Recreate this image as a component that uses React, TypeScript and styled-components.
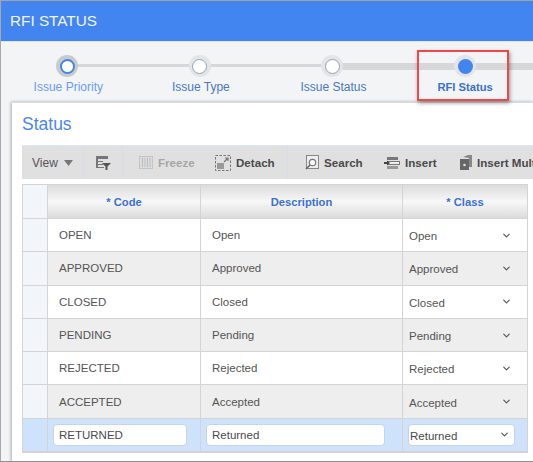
import styled, { createGlobalStyle } from "styled-components";
import { ChevronDown } from "lucide-react";

const GlobalStyle = createGlobalStyle`
  html, body {
    margin: 0;
    padding: 0;
    background: #f3f4f6;
  }
  * {
    box-sizing: border-box;
  }
`;

const Page = styled.div`
  position: relative;
  width: 533px;
  height: 462px;
  overflow: hidden;
  border-top: 1px solid #a3a3a3;
  border-left: 1px solid #a8a8a8;
  border-bottom: 1px solid #8f8f8f;
  background: #f3f4f6;
  font-family: "Liberation Sans", Arial, sans-serif;
`;

const Header = styled.div`
  display: flex;
  align-items: center;
  height: 40px;
  padding-left: 9px;
  background: #4285f0;
  color: #f2f6fe;
  font-size: 15.3px;
`;

const Stepper = styled.div`
  display: flex;
  height: 61px;
  border-top: 1px solid #e4e5e7;
  padding-top: 13px;
`;

const Step = styled.div`
  position: relative;
  display: flex;
  flex-direction: column;
  align-items: center;
  flex: 0 0 132.6px;
`;

const Connector = styled.div<{ $thick?: boolean }>`
  position: absolute;
  left: 50%;
  width: 100%;
  top: ${(p) => (p.$thick ? "8px" : "9px")};
  height: ${(p) => (p.$thick ? "7px" : "3px")};
  background: #d6d7d9;
`;

const Knob = styled.div<{ $variant: "start" | "idle" | "active" }>`
  position: relative;
  z-index: 1;
  width: 22px;
  height: 22px;
  border-radius: 50%;
  background: ${(p) => (p.$variant === "start" ? "#c9cacc" : "#e3e4e6")};
  display: flex;
  align-items: center;
  justify-content: center;
`;

const Dot = styled.div<{ $variant: "start" | "idle" | "active" }>`
  width: 15px;
  height: 15px;
  border-radius: 50%;
  background: ${(p) => (p.$variant === "active" ? "#4285f0" : "#fff")};
  border: ${(p) =>
    p.$variant === "active" ? "none" : p.$variant === "start" ? "2px solid #4285f0" : "1.5px solid #8fa3b5"};
`;

const StepLabel = styled.div<{ $tone: "light" | "mid" | "strong" }>`
  margin-top: 3px;
  margin-left: ${(p) => (p.$tone === "strong" ? "0" : "2px")};
  font-size: ${(p) => (p.$tone === "strong" ? "11.2px" : "12px")};
  line-height: 14px;
  white-space: nowrap;
  font-weight: ${(p) => (p.$tone === "strong" ? 700 : 400)};
  color: ${(p) => (p.$tone === "light" ? "#6a9cf2" : p.$tone === "mid" ? "#4a78c4" : "#3a6fd0")};
`;

const Highlight = styled.div`
  position: absolute;
  left: 416px;
  top: 49px;
  width: 92px;
  height: 51px;
  border: 2px solid #f0474b;
  box-shadow: 1px 2px 4px rgba(0, 0, 0, 0.4);
  z-index: 2;
`;

const Card = styled.div`
  margin-left: 11px;
  height: 360px;
  padding: 0 0 0 10px;
  background: #fff;
  border-top: 1px solid #dcdcdc;
  box-shadow: -1px 0 3px rgba(0, 0, 0, 0.3);
`;

const Title = styled.div`
  height: 42px;
  padding-top: 11px;
  font-size: 17.5px;
  color: #4a86ee;
`;

const Toolbar = styled.div`
  display: flex;
  align-items: center;
  width: 520px;
  height: 34px;
  background: #e0e0e0;
  border-top: 1px solid #dbe6f2;
  font-size: 11.6px;
  font-weight: 700;
  color: #4a4a4a;
  white-space: nowrap;
`;

const ToolGroup = styled.div<{ $width: number; $divider?: boolean; $inset?: number }>`
  display: flex;
  align-items: center;
  height: 100%;
  flex: 0 0 ${(p) => p.$width}px;
  padding-left: ${(p) => p.$inset ?? 11}px;
  border-right: ${(p) => (p.$divider ? "1px solid #d5dde6" : "none")};
`;

const ToolItem = styled.div<{ $disabled?: boolean; $width?: number }>`
  display: flex;
  align-items: center;
  gap: 5px;
  flex: 0 0 ${(p) => (p.$width ? `${p.$width}px` : "auto")};
  color: ${(p) => (p.$disabled ? "#a6a6a6" : "#4a4a4a")};
`;

const ViewLabel = styled.span`
  margin-left: -1px;
  font-size: 12px;
  font-weight: 400;
  color: #555;
`;

const ViewCaret = styled.svg`
  margin-left: 6px;
`;

const Grid = styled.div`
  display: grid;
  grid-template-columns: 25px 153px 202px 125px;
  width: 506px;
  margin-top: 5px;
  border: 1px solid #d4d4d4;
  font-size: 11.5px;
  color: #555;
`;

const Gutter = styled.div<{ $tall?: boolean; $selected?: boolean }>`
  height: ${(p) => (p.$tall ? "34px" : "33.3px")};
  background: ${(p) => (p.$selected ? "#cfe2fb" : "#f2f5fa")};
  border-right: 1px solid #d4d4d4;
  border-bottom: 1px solid #d4d4d4;
`;

const HeadCell = styled.div`
  display: flex;
  align-items: center;
  justify-content: center;
  height: 34px;
  background: linear-gradient(#dcdcdc, #f7f7f7 50%, #dcdcdc);
  border-right: 1px solid #d4d4d4;
  border-bottom: 1px solid #d4d4d4;
  color: #3a70d6;
  font-size: 11.2px;
  font-weight: 700;
`;

const Cell = styled.div<{ $shaded?: boolean; $selected?: boolean; $left?: number; $right?: number }>`
  display: flex;
  align-items: center;
  justify-content: space-between;
  height: 33.3px;
  padding: 0 ${(p) => p.$right ?? 15}px 0 ${(p) => p.$left ?? 11}px;
  background: ${(p) => (p.$selected ? "#cfe2fb" : p.$shaded ? "#eeeeee" : "#fff")};
  border-right: 1px solid #d4d4d4;
  border-bottom: 1px solid #d4d4d4;
`;

const ClassText = styled.span`
  margin-top: 2px;
`;

const TextBox = styled.input`
  width: 100%;
  height: 22px;
  padding: 0 5px;
  border: 1px solid #c8d4e2;
  border-radius: 4px;
  background: #fff;
  font: inherit;
  color: #4a4a4a;
  outline: none;
`;

const SelectBox = styled.div`
  display: flex;
  align-items: center;
  justify-content: space-between;
  width: 100%;
  height: 22px;
  padding: 0 4px 0 1px;
  border: 1px solid #c8d4e2;
  border-radius: 4px;
  background: #fff;
  color: #4a4a4a;
`;

const steps = [
  { label: "Issue Priority", variant: "start", tone: "light" },
  { label: "Issue Type", variant: "idle", tone: "mid" },
  { label: "Issue Status", variant: "idle", tone: "mid", thick: true },
  { label: "RFI Status", variant: "active", tone: "strong", thick: true },
] as const;

const rows = [
  ["OPEN", "Open"],
  ["APPROVED", "Approved"],
  ["CLOSED", "Closed"],
  ["PENDING", "Pending"],
  ["REJECTED", "Rejected"],
  ["ACCEPTED", "Accepted"],
];

function FilterIcon() {
  return (
    <svg width="17" height="16" viewBox="0 0 17 16">
      <path d="M1 1h12v3H1zM1 4h2v9H1zM3 6h5v1H3zM3 9h5v1H3zM3 12h6v1H3z" fill="#777" />
      <path d="M7 8h9l-3.5 3.5V15h-2v-3.5z" fill="#555" />
    </svg>
  );
}

function FreezeIcon() {
  return (
    <svg width="14" height="13" viewBox="0 0 14 13">
      <rect x="0.5" y="0.5" width="13" height="12" fill="#dcdcdc" stroke="#c4c4c4" />
      <path d="M3.5 2v9M6 2v9M8.5 2v9M11 2v9" stroke="#bcbcbc" strokeWidth="1" />
    </svg>
  );
}

function DetachIcon() {
  return (
    <svg width="16" height="16" viewBox="0 0 16 16">
      <rect x="0.5" y="0.5" width="15" height="15" fill="none" stroke="#777" strokeDasharray="2.5 1.5" />
      <rect x="2" y="8" width="7" height="6" fill="#999" />
      <path d="M9 7l4-4M10 3h3v3" fill="none" stroke="#777" strokeWidth="1.2" />
    </svg>
  );
}

function SearchIcon() {
  return (
    <svg width="14" height="15" viewBox="0 0 14 15">
      <rect x="1.5" y="0.5" width="12" height="13" fill="#eee" stroke="#888" />
      <circle cx="7.5" cy="7.5" r="3.2" fill="#fff" stroke="#777" strokeWidth="1.2" />
      <path d="M5 10l-4 4" stroke="#666" strokeWidth="1.6" />
    </svg>
  );
}

function InsertIcon() {
  return (
    <svg width="16" height="14" viewBox="0 0 16 14">
      <path d="M3 1h11v3H3z" fill="#777" />
      <rect x="3.5" y="5.5" width="12" height="3" fill="#eee" stroke="#777" />
      <path d="M3 10h11v3H3z" fill="#999" />
      <path d="M0 6h3V4.500L6 7 3 9.500V8H0z" fill="#444" />
    </svg>
  );
}

function InsertMultiIcon() {
  return (
    <svg width="12" height="15" viewBox="0 0 12 15">
      <path d="M3 2l5-2h4v12H9V3z" fill="#888" />
      <path d="M0 4h9v11H0z" fill="#666" />
      <circle cx="4.500" cy="10" r="1.300" fill="#ddd" />
    </svg>
  );
}

function Row({ code, description, shaded }: { code: string; description: string; shaded: boolean }) {
  return (
    <>
      <Gutter />
      <Cell $shaded={shaded}>{code}</Cell>
      <Cell $shaded={shaded}>{description}</Cell>
      <Cell $shaded={shaded} $left={6}>
        <ClassText>{description}</ClassText>
        <ChevronDown size={11} color="#555" strokeWidth={2.5} />
      </Cell>
    </>
  );
}

export default function App() {
  return (
    <Page>
      <GlobalStyle />
      <Header>RFI STATUS</Header>
      <Stepper>
        {steps.map((step) => (
          <Step key={step.label}>
            <Connector $thick={"thick" in step} />
            <Knob $variant={step.variant}>
              <Dot $variant={step.variant} />
            </Knob>
            <StepLabel $tone={step.tone}>{step.label}</StepLabel>
          </Step>
        ))}
      </Stepper>
      <Highlight />
      <Card>
        <Title>Status</Title>
        <Toolbar>
          <ToolGroup $width={62} $divider>
            <ViewLabel>View</ViewLabel>
            <ViewCaret width="9" height="6" viewBox="0 0 9 6">
              <path d="M0 0h9L4.500 6z" fill="#777" />
            </ViewCaret>
          </ToolGroup>
          <ToolGroup $width={39} $divider>
            <FilterIcon />
          </ToolGroup>
          <ToolGroup $width={165} $divider $inset={16}>
            <ToolItem $disabled $width={76}>
              <FreezeIcon />
              Freeze
            </ToolItem>
            <ToolItem>
              <DetachIcon />
              Detach
            </ToolItem>
          </ToolGroup>
          <ToolGroup $width={260} $inset={17}>
            <ToolItem $width={79}>
              <SearchIcon />
              Search
            </ToolItem>
            <ToolItem $width={76}>
              <InsertIcon />
              Insert
            </ToolItem>
            <ToolItem>
              <InsertMultiIcon />
              Insert Multiple
            </ToolItem>
          </ToolGroup>
        </Toolbar>
        <Grid>
          <Gutter $tall />
          <HeadCell>* Code</HeadCell>
          <HeadCell>Description</HeadCell>
          <HeadCell>* Class</HeadCell>
          {rows.map(([code, description], i) => (
            <Row key={code} code={code} description={description} shaded={i % 2 === 1} />
          ))}
          <Gutter $selected />
          <Cell $selected $left={5} $right={13}>
            <TextBox readOnly value="RETURNED" />
          </Cell>
          <Cell $selected $left={5} $right={17}>
            <TextBox readOnly value="Returned" />
          </Cell>
          <Cell $selected $left={5} $right={12}>
            <SelectBox>
              <ClassText>Returned</ClassText>
              <ChevronDown size={11} color="#555" strokeWidth={2.5} />
            </SelectBox>
          </Cell>
        </Grid>
      </Card>
    </Page>
  );
}
